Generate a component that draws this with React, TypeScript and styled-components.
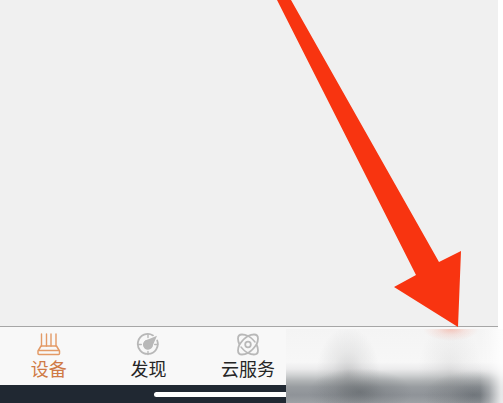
import React from "react";
import styled, { createGlobalStyle } from "styled-components";

const GlobalStyle = createGlobalStyle`
  * { box-sizing: border-box; }
  body {
    margin: 0;
    background: #ffffff;
    font-family: "Liberation Sans", "Noto Sans CJK SC", sans-serif;
  }
`;

const Page = styled.div`
  position: relative;
  display: flex;
  flex-direction: column;
  min-height: 100vh;
  padding-right: 5px;
  overflow: hidden;
`;

const Content = styled.main`
  flex: 1;
  background: #f0f0f0;
`;

const TabBar = styled.nav`
  display: grid;
  grid-template-columns: repeat(5, 1fr);
  height: 59px;
  border-top: 1px solid #a6a6a6;
  background: #f8f8f8;
`;

const Tab = styled.button<{ $active?: boolean }>`
  display: flex;
  flex-direction: column;
  align-items: center;
  padding: 5px 2px 0 0;
  border: 0;
  background: transparent;
  color: ${(p) => (p.$active ? "#cf7a45" : "#262626")};
  font-family: "Noto Sans CJK SC", sans-serif;
  font-size: 18px;
  line-height: 24px;
  white-space: nowrap;
`;

const TabIcon = styled.svg<{ $active?: boolean }>`
  flex: none;
  width: 24px;
  height: 24px;
  fill: none;
  stroke: ${(p) => (p.$active ? "#e39a66" : "#b8b8b8")};
  stroke-width: 1.8;
  stroke-linecap: round;
  stroke-linejoin: round;
`;

const HomeStrip = styled.footer`
  display: flex;
  justify-content: center;
  align-items: center;
  height: 18px;
  background: #202832;
`;

const HomeIndicator = styled.div`
  width: 38%;
  height: 5px;
  border-radius: 3px;
  background: #ffffff;
`;

const Arrow = styled.svg`
  position: absolute;
  right: 42px;
  bottom: 76px;
  width: 184px;
  height: 327px;
`;

const Haze = styled.div`
  position: absolute;
  right: 0;
  bottom: 0;
  width: 217px;
  height: 74px;
  background:
    radial-gradient(ellipse 28px 12px at 165px 0, rgba(247, 110, 80, 0.34), rgba(247, 130, 105, 0.14) 50%, rgba(247, 140, 120, 0) 100%),
    linear-gradient(to right, rgba(255, 255, 255, 0) 194px, rgba(255, 255, 255, 0.25) 203px, rgba(255, 255, 255, 0.8) 215px),
    radial-gradient(ellipse 52px 24px at 74px 63px, rgba(82, 88, 92, 0.5), rgba(90, 95, 99, 0.2) 50%, rgba(100, 104, 108, 0) 100%),
    radial-gradient(ellipse 32px 48px at 62px 46px, rgba(100, 102, 104, 0.26), rgba(104, 106, 108, 0.1) 50%, rgba(110, 110, 110, 0) 100%),
    radial-gradient(ellipse 32px 52px at 164px 44px, rgba(110, 110, 110, 0.12), rgba(110, 110, 110, 0.05) 50%, rgba(110, 110, 110, 0) 100%),
    radial-gradient(ellipse 50px 24px at 188px 66px, rgba(82, 89, 95, 0.5), rgba(90, 96, 101, 0.2) 50%, rgba(100, 104, 108, 0) 100%),
    linear-gradient(to bottom, #f4f4f4 0, #f7f7f7 33px, #ebebec 40px, #d0d2d3 46px, #b0b3b5 52px, #989ca0 58px, #8f9398 66px, #9da1a5 74px);
`;

function RouterIcon() {
  return (
    <TabIcon $active viewBox="0 0 24 24" aria-hidden="true">
      <path d="M4.5 2v12M9.5 2v12M14 2v12M19 2v12" strokeWidth="1.4" />
      <path d="M4 14h15.5l3 5v2.5q0 1-1 1H2q-1 0-1-1V19z" strokeWidth="1.5" />
      <path d="M2 18.5h20" strokeWidth="1.3" />
    </TabIcon>
  );
}

function CompassIcon() {
  return (
    <TabIcon viewBox="0 0 24 24" aria-hidden="true">
      <path d="M17 3.4A10 10 0 1 0 21.2 8.5" />
      <path d="M12 2.5v3M2.3 12.5h3M12 19.5v3M18.7 12.5h3" strokeWidth="1.4" />
      <path d="M21 3.8L17 13a5 5 0 1 1-5.6-5.2z" fill="#b8b8b8" stroke="none" />
      <circle cx="12" cy="12.5" r="3.8" fill="#b8b8b8" />
    </TabIcon>
  );
}

function CloudServiceIcon() {
  return (
    <TabIcon viewBox="0 0 24 24" aria-hidden="true">
      <path d="M6 2.5Q9 2.5 12 4Q15 2.5 18 2.5Q22 2.5 22 6.5Q22 9.500 20.500 12.500Q22 15.500 22 18.500Q22 22.500 18 22.500Q15 22.500 12 21Q9 22.500 6 22.500Q2 22.500 2 18.500Q2 15.500 3.500 12.500Q2 9.500 2 6.500Q2 2.500 6 2.500Z" />
      <path d="M12 4Q7.500 6.500 3.500 12.500M20.500 12.500Q16.500 18.500 12 21M12 4Q14.500 5.200 16.500 7.200M12 21Q9.500 19.800 7.500 17.800M5 15L7.500 17.800M16.500 7.200L19 10" strokeWidth="1.5" />
      <circle cx="12" cy="12.5" r="2.8" />
    </TabIcon>
  );
}

export default function App() {
  return (
    <>
      <GlobalStyle />
      <Page>
        <Content />
        <TabBar>
          <Tab type="button" $active aria-current="page">
            <RouterIcon />
            设备
          </Tab>
          <Tab type="button">
            <CompassIcon />
            发现
          </Tab>
          <Tab type="button">
            <CloudServiceIcon />
            云服务
          </Tab>
        </TabBar>
        <HomeStrip>
          <HomeIndicator />
        </HomeStrip>
        <Haze />
        <Arrow viewBox="0 0 184 327" aria-hidden="true">
          <path d="M0 0H14L162 262L184 251L181 327L117 287L139 275Z" fill="#f83410" />
        </Arrow>
      </Page>
    </>
  );
}
